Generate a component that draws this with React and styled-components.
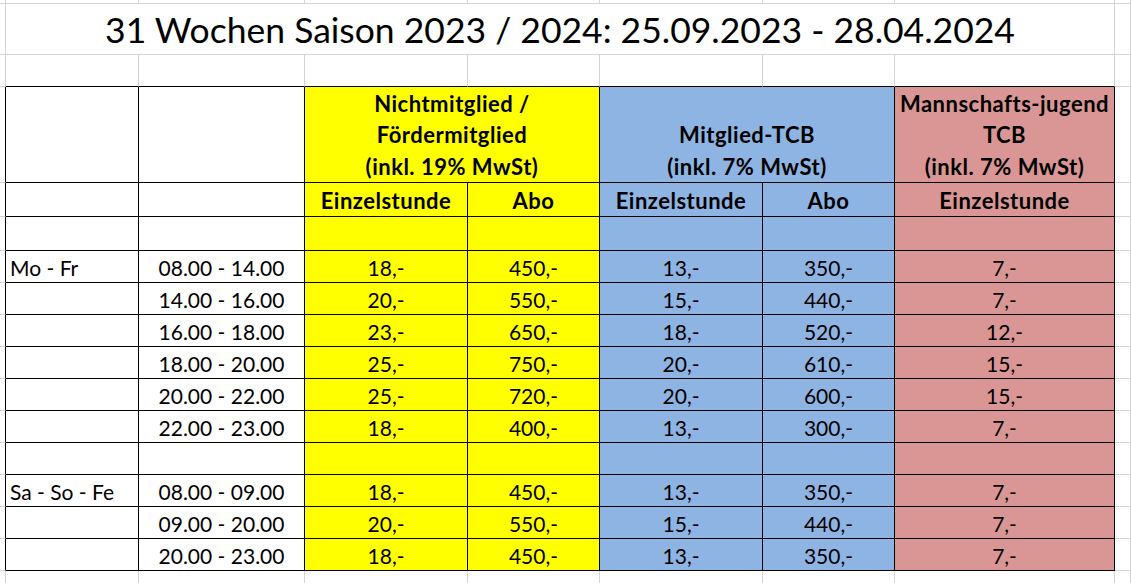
import React from 'react';
import styled, { createGlobalStyle } from 'styled-components';

const GRID = '#d4d4d4';
const LINE = '#000';
const YELLOW = '#ffff00';
const BLUE = '#8db4e2';
const PINK = '#da9694';

const GlobalStyle = createGlobalStyle`
  html, body {
    margin: 0;
    padding: 0;
    background: #fff;
    overflow: hidden;
  }
  body {
    font-family: Lato, "Liberation Sans", sans-serif;
    color: #000;
  }
`;

const Sheet = styled.div`
  display: grid;
  grid-template-columns: 6px 133px 166px 163px 132px 163px 132px 220px 16px;
  grid-template-rows: 4px 51px 32px 96px 34px 34px repeat(10, 32px) 20px;
  width: 1131px;
  height: 583px;
  overflow: hidden;
`;

const Cell = styled.div`
  box-sizing: border-box;
  grid-column: span ${(p) => p.$span || 1};
  display: flex;
  align-items: ${(p) => (p.$valign === 'center' ? 'center' : 'flex-end')};
  justify-content: ${(p) => (p.$align === 'left' ? 'flex-start' : 'center')};
  text-align: ${(p) => (p.$align === 'left' ? 'left' : 'center')};
  padding: ${(p) => (p.$valign === 'center' ? 3 : 0)}px 0
    ${(p) => (p.$pb != null ? p.$pb : p.$valign === 'center' ? 0 : 1)}px
    ${(p) => (p.$align === 'left' ? 4 : 0)}px;
  background: ${(p) => p.$bg || 'transparent'};
  border-right: 1px solid ${(p) => p.$right || GRID};
  border-bottom: 1px solid ${(p) => p.$bottom || GRID};
  font-size: ${(p) => (p.$bold ? 22 : 21)}px;
  letter-spacing: ${(p) => (p.$bold ? 0.5 : 0)}px;
  line-height: 26px;
  font-weight: ${(p) => (p.$bold ? 700 : 400)};
  white-space: nowrap;
  overflow: hidden;
`;

const Title = styled(Cell)`
  font-size: 35.5px;
  line-height: 44px;
  padding-bottom: 2px;
`;

const HeadText = styled.span`
  line-height: 31.5px;
`;

const groupBg = [null, null, YELLOW, YELLOW, BLUE, BLUE, PINK];

const moFr = [
  ['Mo - Fr', '08.00 - 14.00', '18,-', '450,-', '13,-', '350,-', '7,-'],
  ['', '14.00 - 16.00', '20,-', '550,-', '15,-', '440,-', '7,-'],
  ['', '16.00 - 18.00', '23,-', '650,-', '18,-', '520,-', '12,-'],
  ['', '18.00 - 20.00', '25,-', '750,-', '20,-', '610,-', '15,-'],
  ['', '20.00 - 22.00', '25,-', '720,-', '20,-', '600,-', '15,-'],
  ['', '22.00 - 23.00', '18,-', '400,-', '13,-', '300,-', '7,-'],
];

const weekend = [
  ['Sa - So - Fe', '08.00 - 09.00', '18,-', '450,-', '13,-', '350,-', '7,-'],
  ['', '09.00 - 20.00', '20,-', '550,-', '15,-', '440,-', '7,-'],
  ['', '20.00 - 23.00', '18,-', '450,-', '13,-', '350,-', '7,-'],
];

const blank = ['', '', '', '', '', '', ''];

// plain spreadsheet row outside the table
const GridRow = () => (
  <>
    {Array.from({ length: 9 }).map((_, i) => (
      <Cell key={i} />
    ))}
  </>
);

const TableRow = ({ cells, bold, valign }) => (
  <>
    <Cell $right={LINE} />
    {cells.map((text, i) => (
      <Cell
        key={i}
        $bg={groupBg[i]}
        $right={LINE}
        $bottom={LINE}
        $align={i === 0 ? 'left' : 'center'}
        $bold={bold}
        $valign={valign}
      >
        {text}
      </Cell>
    ))}
    <Cell />
  </>
);

const App = () => (
  <>
    <GlobalStyle />
    <Sheet>
      <GridRow />

      <Cell />
      <Title $span={7}>31 Wochen Saison 2023 / 2024: 25.09.2023 - 28.04.2024</Title>
      <Cell />

      <Cell />
      {Array.from({ length: 7 }).map((_, i) => (
        <Cell key={i} $bottom={LINE} />
      ))}
      <Cell />

      <Cell $right={LINE} />
      <Cell $right={LINE} $bottom={LINE} />
      <Cell $right={LINE} $bottom={LINE} />
      <Cell $span={2} $bg={YELLOW} $right={LINE} $bottom={LINE} $bold $pb={0}>
        <HeadText>
          Nichtmitglied /<br />
          Fördermitglied<br />
          (inkl. 19% MwSt)
        </HeadText>
      </Cell>
      <Cell $span={2} $bg={BLUE} $right={LINE} $bottom={LINE} $bold $pb={0}>
        <HeadText>
          Mitglied-TCB<br />
          (inkl. 7% MwSt)
        </HeadText>
      </Cell>
      <Cell $bg={PINK} $right={LINE} $bottom={LINE} $bold $pb={0}>
        <HeadText>
          Mannschafts-jugend<br />
          TCB<br />
          (inkl. 7% MwSt)
        </HeadText>
      </Cell>
      <Cell />

      <TableRow cells={['', '', 'Einzelstunde', 'Abo', 'Einzelstunde', 'Abo', 'Einzelstunde']} bold valign="center" />
      <TableRow cells={blank} />
      {moFr.map((r, i) => (
        <TableRow key={'m' + i} cells={r} />
      ))}
      <TableRow cells={blank} />
      {weekend.map((r, i) => (
        <TableRow key={'w' + i} cells={r} />
      ))}

      <GridRow />
    </Sheet>
  </>
);

export default App;
